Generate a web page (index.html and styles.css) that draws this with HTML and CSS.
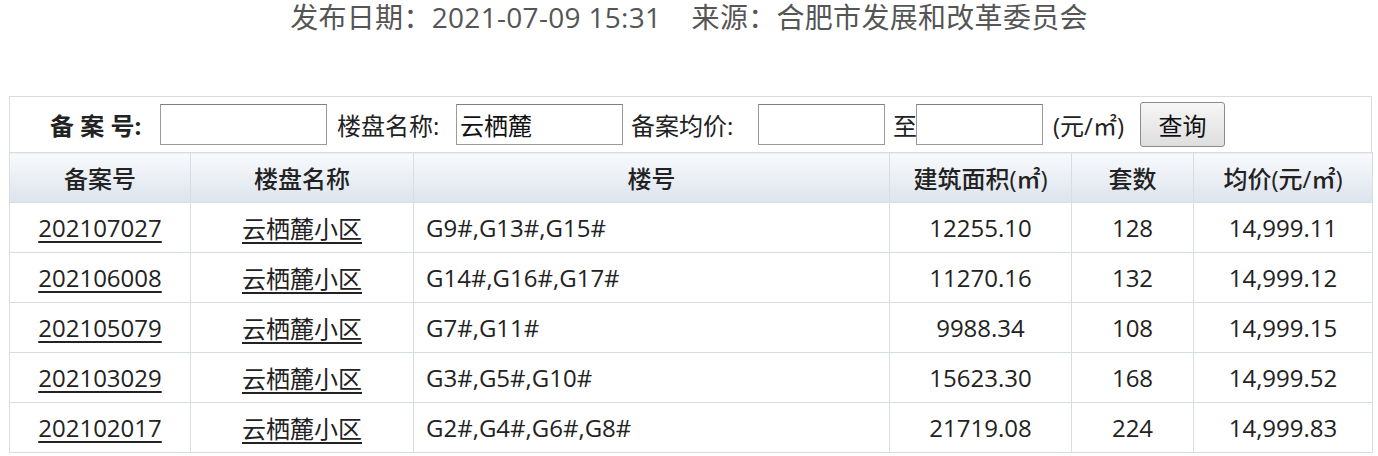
FILE: index.html
```html
<!DOCTYPE html>
<html lang="zh-CN">
<head>
  <meta charset="UTF-8">
  <title>商品住房备案价格公示</title>
  <link rel="stylesheet" href="styles.css">
</head>
<body>
  <p class="meta">发布日期：2021-07-09 15:31&nbsp;&nbsp;&nbsp;&nbsp;来源：合肥市发展和改革委员会</p>

  <div class="panel">
    <form class="search">
      <label class="lbl lbl-no" for="recordNo">备&nbsp;案&nbsp;号:</label>
      <input type="text" id="recordNo" class="box box-wide">

      <label class="lbl lbl-name" for="estate">楼盘名称:</label>
      <input type="text" id="estate" class="box box-wide" value="云栖麓">

      <label class="lbl lbl-price" for="priceFrom">备案均价:</label>
      <input type="text" id="priceFrom" class="box">

      <span class="lbl lbl-to">至</span>
      <input type="text" id="priceTo" class="box">

      <span class="lbl lbl-unit">(元/㎡)</span>
      <button type="button" class="btn">查询</button>
    </form>

    <table class="list">
      <colgroup>
        <col style="width:181px">
        <col style="width:223px">
        <col style="width:476px">
        <col style="width:182px">
        <col style="width:122px">
        <col style="width:179px">
      </colgroup>
      <thead>
        <tr>
          <th>备案号</th>
          <th>楼盘名称</th>
          <th>楼号</th>
          <th>建筑面积(㎡)</th>
          <th>套数</th>
          <th>均价(元/㎡)</th>
        </tr>
      </thead>
      <tbody>
        <tr>
          <td><a href="#">202107027</a></td>
          <td><a href="#">云栖麓小区</a></td>
          <td class="bld">G9#,G13#,G15#</td>
          <td>12255.10</td>
          <td>128</td>
          <td>14,999.11</td>
        </tr>
        <tr>
          <td><a href="#">202106008</a></td>
          <td><a href="#">云栖麓小区</a></td>
          <td class="bld">G14#,G16#,G17#</td>
          <td>11270.16</td>
          <td>132</td>
          <td>14,999.12</td>
        </tr>
        <tr>
          <td><a href="#">202105079</a></td>
          <td><a href="#">云栖麓小区</a></td>
          <td class="bld">G7#,G11#</td>
          <td>9988.34</td>
          <td>108</td>
          <td>14,999.15</td>
        </tr>
        <tr>
          <td><a href="#">202103029</a></td>
          <td><a href="#">云栖麓小区</a></td>
          <td class="bld">G3#,G5#,G10#</td>
          <td>15623.30</td>
          <td>168</td>
          <td>14,999.52</td>
        </tr>
        <tr>
          <td><a href="#">202102017</a></td>
          <td><a href="#">云栖麓小区</a></td>
          <td class="bld">G2#,G4#,G6#,G8#</td>
          <td>21719.08</td>
          <td>224</td>
          <td>14,999.83</td>
        </tr>
      </tbody>
    </table>
  </div>
</body>
</html>
```

FILE: styles.css
```css
body {
  margin: 0;
  background: #fff;
  font-family: "Open Sans", "Noto Sans CJK SC", sans-serif;
  color: #222;
}

.meta {
  margin: 0;
  height: 34px;
  line-height: 34px;
  text-align: center;
  font-size: 28px;
  letter-spacing: 0.3px;
  color: #555;
  white-space: nowrap;
}

.panel {
  margin: 62px 6px 0 9px;
  width: 1363px;
}

.search {
  box-sizing: border-box;
  display: flex;
  align-items: center;
  height: 56px;
  padding-left: 40px;
  border: 1px solid #d8dde3;
  border-bottom: none;
  background: #fff;
}

.lbl {
  flex: none;
  font-size: 24px;
  color: #222;
  white-space: nowrap;
}

.lbl-no {
  width: 110px;
  font-weight: 700;
}

.lbl-name {
  margin-left: 10px;
  width: 119px;
}

.lbl-price {
  margin-left: 8px;
  width: 127px;
}

.lbl-to {
  margin-left: 8px;
  width: 23px;
}

.lbl-unit {
  margin-left: 10px;
  width: 87px;
}

.box {
  box-sizing: border-box;
  flex: none;
  width: 127px;
  height: 41px;
  margin: 0;
  padding: 0 3px;
  border: 1px solid #9a9a9a;
  border-top-color: #7f7f7f;
  background: #fff;
  font-family: "Noto Sans CJK SC", sans-serif;
  font-size: 24px;
  color: #111;
}

.box-wide {
  width: 167px;
}

.btn {
  box-sizing: border-box;
  flex: none;
  width: 85px;
  height: 45px;
  margin: 0;
  padding: 0;
  border: 1px solid #8c8c8c;
  border-radius: 3px;
  background: linear-gradient(#f6f6f6, #dedede);
  font-family: "Noto Sans CJK SC", sans-serif;
  font-size: 24px;
  color: #111;
}

.list {
  width: 1363px;
  border-collapse: collapse;
  table-layout: fixed;
  font-size: 24px;
}

.list th,
.list td {
  border: 1px solid #d8dde3;
  padding: 0;
  text-align: center;
  white-space: nowrap;
}

.list th {
  height: 49px;
  background: linear-gradient(#f9fafc, #dce4ed);
  font-weight: 500;
  color: #222;
}

.list td {
  height: 49px;
  background: #fff;
}

.list td.bld {
  text-align: left;
  padding-left: 12px;
}

.list a {
  color: #222;
  text-decoration: underline;
  text-underline-offset: 4px;
}
```
